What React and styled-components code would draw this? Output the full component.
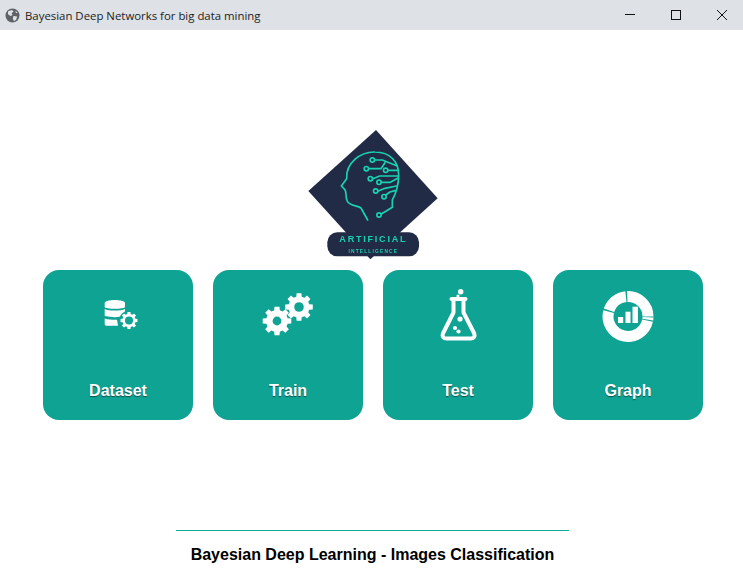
import React from 'react'
import styled, { createGlobalStyle } from 'styled-components'

const Global = createGlobalStyle`
  html, body { margin: 0; padding: 0; background: #fff; }
  body { font-family: "Liberation Sans", Arial, sans-serif; }
`

const Page = styled.div`
  width: 743px;
  height: 579px;
  overflow: hidden;
  display: flex;
  flex-direction: column;
  background: #fff;
`

const TitleBar = styled.div`
  height: 30px;
  flex: none;
  display: flex;
  align-items: center;
  padding-left: 5px;
  background: #dee1e6;
  overflow: hidden;
`

const TitleText = styled.span`
  margin-left: 5px;
  font-family: "Open Sans", sans-serif;
  font-size: 11.4px;
  color: #1c1c1c;
  white-space: nowrap;
`

const WinButtons = styled.div`
  display: flex;
  margin-left: auto;
  margin-right: -2px;
`

const WinButton = styled.div`
  width: 46px;
  height: 30px;
  display: flex;
  align-items: center;
  justify-content: center;
`

const Main = styled.main`
  flex: 1;
  display: flex;
  flex-direction: column;
  align-items: center;
  padding: 90px 40px 0 43px;
`

const LogoArt = styled.svg`
  display: block;
  width: 155px;
  height: 145px;
  margin-left: -1px;
  filter: blur(0.4px);
`

const Cards = styled.div`
  display: flex;
  gap: 20px;
  margin-top: 5px;
`

const Card = styled.div`
  width: 150px;
  height: 150px;
  box-sizing: border-box;
  padding-top: 15px;
  border-radius: 16px;
  background: #0fa394;
  display: flex;
  flex-direction: column;
  align-items: center;
  color: #fff;
`

const CardIcon = styled.svg`
  display: block;
  width: 60px;
  height: 60px;
  filter: blur(0.3px);
`

const CardLabel = styled.div`
  margin-top: 37px;
  font-size: 16px;
  line-height: 18px;
  font-weight: 700;
  text-shadow: 0 1px 1px rgba(0, 0, 0, 0.5);
`

const Footer = styled.footer`
  width: 393px;
  margin-top: 110px;
  margin-left: -1px;
  border-top: 1px solid #0fae9b;
  padding-top: 15px;
  text-align: center;
  font-size: 16px;
  line-height: 18px;
  font-weight: 700;
  color: #000;
  white-space: nowrap;
`

const TEAL = '#0fa394'
const NEON = '#17d3b2'
const NAVY = '#222b45'

// polygon outline of a cog, used by two of the card icons
const gearPath = (cx, cy, outer, inner, teeth) => {
  const step = (Math.PI * 2) / teeth
  const pts = []
  for (let i = 0; i < teeth; i++) {
    const a = i * step - Math.PI / 2
    const w = step * 0.22
    const w2 = step * 0.33
    pts.push([a - w2, inner], [a - w, outer], [a + w, outer], [a + w2, inner])
  }
  return (
    pts
      .map(([a, r], i) => `${i ? 'L' : 'M'}${(cx + r * Math.cos(a)).toFixed(2)} ${(cy + r * Math.sin(a)).toFixed(2)}`)
      .join(' ') + ' Z'
  )
}

const polar = (cx, cy, r, deg) => {
  const a = ((deg - 90) * Math.PI) / 180
  return `${(cx + r * Math.cos(a)).toFixed(2)} ${(cy + r * Math.sin(a)).toFixed(2)}`
}

const arc = (cx, cy, r, from, to) =>
  `M${polar(cx, cy, r, from)} A${r} ${r} 0 ${to - from > 180 ? 1 : 0} 1 ${polar(cx, cy, r, to)}`

const Globe = () => (
  <svg width="15" height="15" viewBox="0 0 15 15">
    <circle cx="7.5" cy="7.5" r="7" fill="#5f6368" />
    <path d="M3 3.2 L7 2 L8.6 3.4 L6.6 5.2 L7.6 7 L5.4 8 L3 6.2 Z M8.4 8 L12.2 8.4 L11 12 L8.8 13 L7.8 10.4 Z M10.4 2.8 L12.6 4.4 L11 5.2 Z" fill="#dee1e6" />
  </svg>
)

const Minimize = () => (
  <svg width="10" height="10" viewBox="0 0 10 10">
    <path d="M0 4.5 H10" stroke="#111" strokeWidth="1" />
  </svg>
)

const Maximize = () => (
  <svg width="10" height="10" viewBox="0 0 10 10">
    <rect x="0.5" y="0.5" width="9" height="9" fill="none" stroke="#111" strokeWidth="1" />
  </svg>
)

const Close = () => (
  <svg width="10" height="10" viewBox="0 0 10 10">
    <path d="M0 0 L10 10 M10 0 L0 10" stroke="#111" strokeWidth="1" />
  </svg>
)

const Logo = () => (
  <LogoArt viewBox="0 0 465 435">
    <path d="M243 30 L428 235 L226 418 L40 213 Z" fill={NAVY} />
    <rect x="97" y="337" width="275" height="72" rx="30" fill={NAVY} />
    <g fill="none" stroke={NEON} strokeWidth="5" strokeLinejoin="round" strokeLinecap="round">
      <path d="M218 300 L198 264 C185 256 165 258 157 244 C150 232 156 215 149 208 L139 198 L155 176 C152 130 195 95 240 96 C285 96 311 125 311 165 C311 200 300 225 292 240 L292 262 L259 282" />
      <path d="M240 120 H262 L305 137" />
      <path d="M222 146 H258 L270 128" />
      <path d="M280 151 H310" />
      <path d="M234 176 L254 168 H310" />
      <path d="M260 187 H286 L308 175" />
      <path d="M250 213 L270 205 L304 198" />
      <path d="M272 225 L285 216 L300 212" />
      <circle cx="232" cy="120" r="6.5" />
      <circle cx="214" cy="146" r="6.5" />
      <circle cx="272" cy="151" r="6.5" />
      <circle cx="226" cy="176" r="6.5" />
      <circle cx="252" cy="187" r="6.5" />
      <circle cx="242" cy="213" r="6.5" />
      <circle cx="267" cy="230" r="6.5" />
      <circle cx="252" cy="285" r="6.5" />
    </g>
    <text x="235" y="367" textAnchor="middle" fill={NEON} fontFamily="Liberation Sans, sans-serif" fontSize="27" fontWeight="700" letterSpacing="5.4">ARTIFICIAL</text>
    <text x="235" y="399" textAnchor="middle" fill={NEON} fontFamily="Liberation Sans, sans-serif" fontSize="14.5" fontWeight="700" letterSpacing="3.6">INTELLIGENCE</text>
  </LogoArt>
)

const DatasetIcon = () => (
  <CardIcon viewBox="0 0 60 60">
    <g fill="#fff">
      <path d="M16.7 18 C16.7 14 37 14 37 18 V22 C37 24.4 16.7 24.4 16.7 22 Z" />
      <path d="M16.7 24 C20 26 33 26 37 24 V31 C30 32.5 24 32.5 16.7 31 Z" />
      <path d="M16.7 33.5 C21 34.8 26 35 29 34.8 L30 40.8 H19 C17.6 40.8 16.7 40 16.7 39 Z" />
    </g>
    <circle cx="41" cy="35.5" r="10" fill={TEAL} />
    <path d={gearPath(41, 35.5, 8.6, 6.6, 8)} fill="#fff" />
    <circle cx="41" cy="35.5" r="4" fill={TEAL} />
  </CardIcon>
)

const TrainIcon = () => (
  <CardIcon viewBox="0 0 60 60">
    <path d={gearPath(19, 36, 14.5, 11, 8)} fill="#fff" />
    <circle cx="19" cy="36" r="4.4" fill={TEAL} />
    <path d={gearPath(41, 22, 14, 10.6, 8)} fill="#fff" />
    <circle cx="41" cy="22" r="4.8" fill={TEAL} />
  </CardIcon>
)

const TestIcon = () => (
  <CardIcon viewBox="0 0 60 60">
    <path
      d="M25.5 14.5 V27.5 L15.2 48 C13.6 51.5 15.5 53.5 18.5 53.5 H43 C46 53.5 47.4 51.5 46 48 L35.5 27.5 V14.5"
      fill="none"
      stroke="#fff"
      strokeWidth="4"
      strokeLinejoin="round"
    />
    <path d="M23.5 14 H37.5" stroke="#fff" strokeWidth="4" strokeLinecap="round" />
    <g fill="#fff">
      <circle cx="32.7" cy="6.7" r="2.7" />
      <circle cx="30" cy="11" r="1.6" />
      <circle cx="32" cy="34" r="2.6" />
      <circle cx="27" cy="43" r="2.1" />
      <circle cx="30.5" cy="46.5" r="2.1" />
    </g>
  </CardIcon>
)

const GraphIcon = () => (
  <CardIcon viewBox="0 0 60 60">
    <g fill="none" stroke="#fff" strokeWidth="11">
      <path d={arc(30, 31.5, 20, -2, 90)} />
      <path d={arc(30, 31.5, 20, 92, 99)} />
      <path d={arc(30, 31.5, 20, 102, 284)} />
      <path d={arc(30, 31.5, 20, 288, 354)} />
    </g>
    <g fill="#fff">
      <rect x="20" y="32" width="5.2" height="6" />
      <rect x="27.5" y="26.7" width="5" height="11.3" />
      <rect x="34.5" y="21.7" width="5.4" height="16.3" />
    </g>
  </CardIcon>
)

const items = [
  { label: 'Dataset', Icon: DatasetIcon },
  { label: 'Train', Icon: TrainIcon },
  { label: 'Test', Icon: TestIcon },
  { label: 'Graph', Icon: GraphIcon },
]

export default function App() {
  return (
    <Page>
      <Global />
      <TitleBar>
        <Globe />
        <TitleText>Bayesian Deep Networks for big data mining</TitleText>
        <WinButtons>
          <WinButton><Minimize /></WinButton>
          <WinButton><Maximize /></WinButton>
          <WinButton><Close /></WinButton>
        </WinButtons>
      </TitleBar>
      <Main>
        <Logo />
        <Cards>
          {items.map(({ label, Icon }) => (
            <Card key={label}>
              <Icon />
              <CardLabel>{label}</CardLabel>
            </Card>
          ))}
        </Cards>
        <Footer>Bayesian Deep Learning - Images Classification</Footer>
      </Main>
    </Page>
  )
}
